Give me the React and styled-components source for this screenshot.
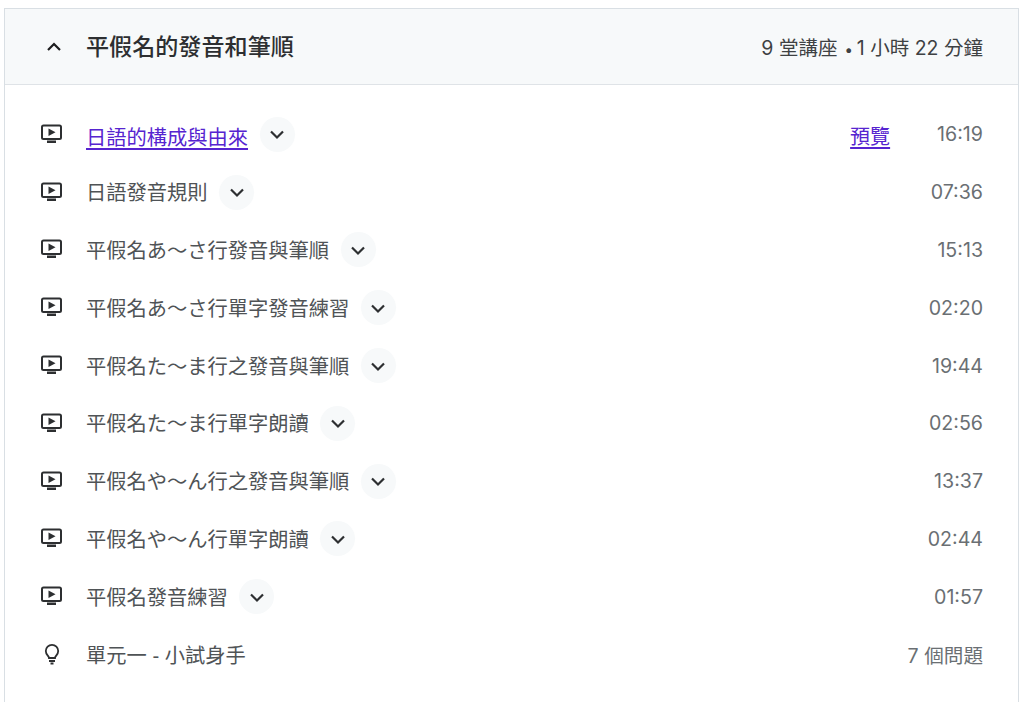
import React from "react";
import styled, { createGlobalStyle } from "styled-components";

const GlobalStyle = createGlobalStyle`
  html, body {
    margin: 0;
    background: #fff;
    overflow: hidden;
  }
  body {
    font-family: "Liberation Sans", "Noto Sans CJK TC", sans-serif;
    color: #1c1d1f;
  }
`;

const Page = styled.div`
  height: 702px;
  padding: 8px 5px 0 4px;
  box-sizing: border-box;
  overflow: hidden;
`;

const Panel = styled.section`
  height: 720px;
  border: 1px solid #d9dfe4;
  border-bottom: none;
`;

const Header = styled.header`
  display: flex;
  align-items: center;
  justify-content: space-between;
  height: 75px;
  padding: 0 35px 0 41px;
  background: #f7f9fa;
  border-bottom: 1px solid #dfe3e7;
`;

const HeaderLeft = styled.div`
  display: flex;
  align-items: center;
  gap: 24px;
`;

const Title = styled.h3`
  margin: 0;
  font-size: 23.1px;
  font-weight: 500;
  line-height: 30px;
  color: #2d2f31;
`;

const Summary = styled.span`
  font-family: "Inter", "Noto Sans CJK TC", sans-serif;
  font-size: 19.5px;
  color: #3e4143;
`;

const Dot = styled.span`
  margin: 0 4px 0 7px;
  font-size: 15px;
`;

const List = styled.ul`
  list-style: none;
  margin: 0;
  padding: 20px 35px 0 36px;
`;

const Row = styled.li`
  display: flex;
  align-items: center;
  height: 57.8px;
  font-size: 20.25px;
  color: #4f5356;
`;

const IconSlot = styled.span`
  display: flex;
  justify-content: center;
  width: 21px;
  margin-right: 24px;
  color: #2d2f31;
`;

const LessonLink = styled.a`
  margin-top: 5px;
  color: #5624d0;
  text-decoration: underline;
  text-underline-offset: 3px;
`;

const ExpandButton = styled.button`
  display: flex;
  align-items: center;
  justify-content: center;
  width: 35px;
  height: 35px;
  margin: 1px 0 0 11.5px;
  padding: 0;
  border: none;
  border-radius: 50%;
  background: #f7f9fa;
  color: #2d2f31;
`;

const Preview = styled.a`
  margin-top: 4px;
  margin-left: auto;
  margin-right: 47px;
  font-size: 20px;
  color: #5624d0;
  text-decoration: underline;
  text-underline-offset: 3px;
`;

const Meta = styled.span`
  margin-top: 1px;
  margin-left: ${(p) => (p.$pushed ? "0" : "auto")};
  font-family: "Inter", "Noto Sans CJK TC", sans-serif;
  font-size: 19.6px;
  color: #6a6f73;
`;

const VideoIcon = () => (
  <svg width="21" height="20" viewBox="0 0 21 20" fill="none">
    <rect x="1" y="1.500" width="19" height="13.500" rx="1.500" stroke="currentColor" strokeWidth="2" />
    <path d="M7.500 4.500l7 3.800-7 3.800z" fill="currentColor" />
    <rect x="6" y="16.500" width="9" height="2.500" fill="currentColor" />
  </svg>
);

const BulbIcon = () => (
  <svg width="16" height="22" viewBox="0 0 16 22" fill="none" stroke="currentColor" strokeWidth="1.800">
    <path d="M5 15c0-2-3.200-3.200-3.200-7a6.200 6.200 0 0 1 12.400 0c0 3.800-3.200 5-3.200 7z" />
    <path d="M5 18h6M6.500 20.500h3" />
  </svg>
);

const Chevron = ({ up }) => (
  <svg width="16" height="16" viewBox="0 0 16 16" fill="none" stroke="currentColor" strokeWidth="2.200">
    <path d={up ? "M2 11l6-6 6 6" : "M2 5.500l6 6 6-6"} />
  </svg>
);

const lessons = [
  { title: "日語的構成與由來", time: "16:19", preview: true },
  { title: "日語發音規則", time: "07:36" },
  { title: "平假名あ～さ行發音與筆順", time: "15:13" },
  { title: "平假名あ～さ行單字發音練習", time: "02:20" },
  { title: "平假名た～ま行之發音與筆順", time: "19:44" },
  { title: "平假名た～ま行單字朗讀", time: "02:56" },
  { title: "平假名や～ん行之發音與筆順", time: "13:37" },
  { title: "平假名や～ん行單字朗讀", time: "02:44" },
  { title: "平假名發音練習", time: "01:57" },
];

const App = () => (
  <Page>
    <GlobalStyle />
    <Panel>
      <Header>
        <HeaderLeft>
          <Chevron up />
          <Title>平假名的發音和筆順</Title>
        </HeaderLeft>
        <Summary>
          9 堂講座<Dot>•</Dot>1 小時 22 分鐘
        </Summary>
      </Header>
      <List>
        {lessons.map((l) => (
          <Row key={l.title}>
            <IconSlot>
              <VideoIcon />
            </IconSlot>
            {l.preview ? <LessonLink href="#">{l.title}</LessonLink> : <span>{l.title}</span>}
            <ExpandButton aria-label="展開">
              <Chevron />
            </ExpandButton>
            {l.preview && <Preview href="#">預覽</Preview>}
            <Meta $pushed={l.preview}>{l.time}</Meta>
          </Row>
        ))}
        <Row>
          <IconSlot>
            <BulbIcon />
          </IconSlot>
          <span>單元一 - 小試身手</span>
          <Meta>7 個問題</Meta>
        </Row>
      </List>
    </Panel>
  </Page>
);

export default App;
